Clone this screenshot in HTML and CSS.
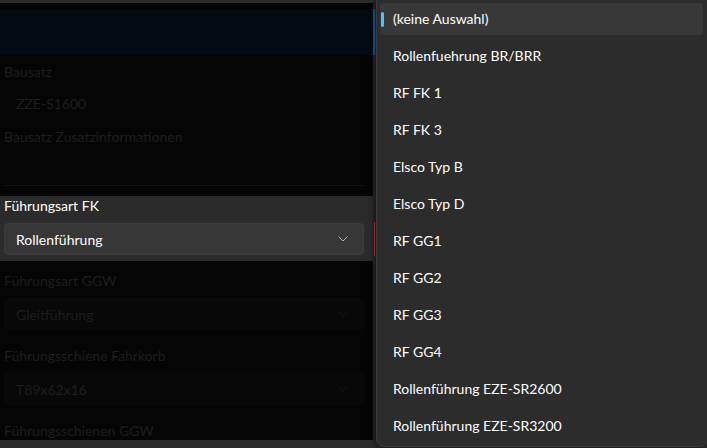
FILE: index.html
```html
<!DOCTYPE html>
<html lang="de">
<head>
<meta charset="utf-8">
<link rel="stylesheet" href="styles.css">
</head>
<body>
<div class="window">
  <div class="form">
    <div class="form-inner">
      <div class="head-block"></div>
      <div class="field">
        <div class="label">Bausatz</div>
        <div class="readonly">ZZE-S1600</div>
      </div>
      <div class="field">
        <div class="label">Bausatz Zusatzinformationen</div>
        <div class="textarea"></div>
      </div>
      <div class="field active">
        <div class="label">Führungsart FK</div>
        <div class="combo">
          <span>Rollenführung</span>
          <svg class="chev" width="10" height="6" viewBox="0 0 10 6"><path d="M0.5 0.5 L5 5 L9.5 0.5" fill="none" stroke="currentColor" stroke-width="1"/></svg>
        </div>
      </div>
      <div class="field">
        <div class="label">Führungsart GGW</div>
        <div class="combo">
          <span>Gleitführung</span>
          <svg class="chev" width="10" height="6" viewBox="0 0 10 6"><path d="M0.5 0.5 L5 5 L9.5 0.5" fill="none" stroke="currentColor" stroke-width="1"/></svg>
        </div>
      </div>
      <div class="field">
        <div class="label">Führungsschiene Fahrkorb</div>
        <div class="combo">
          <span>T89x62x16</span>
          <svg class="chev" width="10" height="6" viewBox="0 0 10 6"><path d="M0.5 0.5 L5 5 L9.5 0.5" fill="none" stroke="currentColor" stroke-width="1"/></svg>
        </div>
      </div>
      <div class="field">
        <div class="label">Führungsschienen GGW</div>
      </div>
    </div>
  </div>
  <div class="gutter">
    <div class="accent blue"></div>
    <div class="accent red"></div>
  </div>
</div>

<div class="popup">
  <div class="item selected"><span class="ind"></span>(keine Auswahl)</div>
  <div class="item">Rollenfuehrung BR/BRR</div>
  <div class="item">RF FK 1</div>
  <div class="item">RF FK 3</div>
  <div class="item">Elsco Typ B</div>
  <div class="item">Elsco Typ D</div>
  <div class="item">RF GG1</div>
  <div class="item">RF GG2</div>
  <div class="item">RF GG3</div>
  <div class="item">RF GG4</div>
  <div class="item">Rollenführung EZE-SR2600</div>
  <div class="item">Rollenführung EZE-SR3200</div>
</div>
</body>
</html>
```

FILE: styles.css
```css
html, body {
  margin: 0;
  padding: 0;
  width: 707px;
  height: 448px;
  overflow: hidden;
  background: #2b2b2b;
  font-family: Lato, "Noto Sans", sans-serif;
  font-size: 14px;
  color: #fff;
}

.window {
  display: flex;
  height: 448px;
  padding-top: 3px;
  padding-bottom: 8px;
  box-sizing: border-box;
}

.form {
  width: 373px;
  background: #050505;
  overflow: hidden;
}

.form-inner {
  display: flex;
  flex-direction: column;
  padding-top: 6px;
}

.head-block {
  height: 46px;
  background: #020a12;
  margin-bottom: 7px;
}

.field {
  display: flex;
  flex-direction: column;
  padding: 0 9px 6px 4px;
  margin-bottom: 10px;
}

.label {
  line-height: 20px;
  height: 20px;
  color: #1d1d1d;
  white-space: nowrap;
}

.readonly {
  height: 32px;
  line-height: 32px;
  padding-left: 12px;
  color: #1d1d1d;
  margin-top: 6px;
}

.field:nth-child(2) {
  margin-bottom: 0;
  padding-bottom: 7px;
}

.textarea {
  height: 31px;
  margin-top: 7px;
  border-bottom: 1px solid #141414;
}

.field:nth-child(3) {
  margin-bottom: 0;
  padding-bottom: 10px;
}

.combo {
  margin-top: 7px;
  height: 32px;
  box-sizing: border-box;
  border-radius: 4px;
  background: #080808;
  border: 1px solid #0a0a0a;
  display: flex;
  align-items: center;
  justify-content: space-between;
  padding: 0 15px 0 11px;
  color: #1d1d1d;
}

.chev {
  color: #141414;
}

.field.active {
  background: #2b2b2b;
}

.field.active .label {
  color: #fff;
}

.field.active .combo {
  background: #373737;
  border-color: #3c3c3c;
  color: #fff;
}

.field.active .chev {
  color: #b0b0b0;
}

.gutter {
  position: relative;
  width: 4px;
  background: #262626;
}

.accent {
  position: absolute;
  left: 0;
  width: 2px;
}

.accent.blue {
  top: 6px;
  height: 46px;
  background: #0a5ea8;
}

.accent.red {
  left: 1px;
  width: 1px;
  top: 219px;
  height: 34px;
  background: #b03838;
}

.popup {
  position: absolute;
  left: 376px;
  top: -8px;
  width: 332px;
  height: 455px;
  box-sizing: border-box;
  background: #2c2c2c;
  border: 1px solid #393939;
  border-radius: 8px;
  display: flex;
  flex-direction: column;
  gap: 5px;
  padding: 10px 4px 0 3px;
  box-shadow: -2px 2px 6px rgba(0, 0, 0, 0.4);
}

.item {
  position: relative;
  height: 32px;
  line-height: 32px;
  padding-left: 13px;
  border-radius: 4px;
  white-space: nowrap;
  flex-shrink: 0;
}

.item.selected {
  background: #383838;
}

.ind {
  position: absolute;
  left: 1px;
  top: 9px;
  width: 3px;
  height: 15px;
  border-radius: 2px;
  background: #4cc2ff;
}
```
